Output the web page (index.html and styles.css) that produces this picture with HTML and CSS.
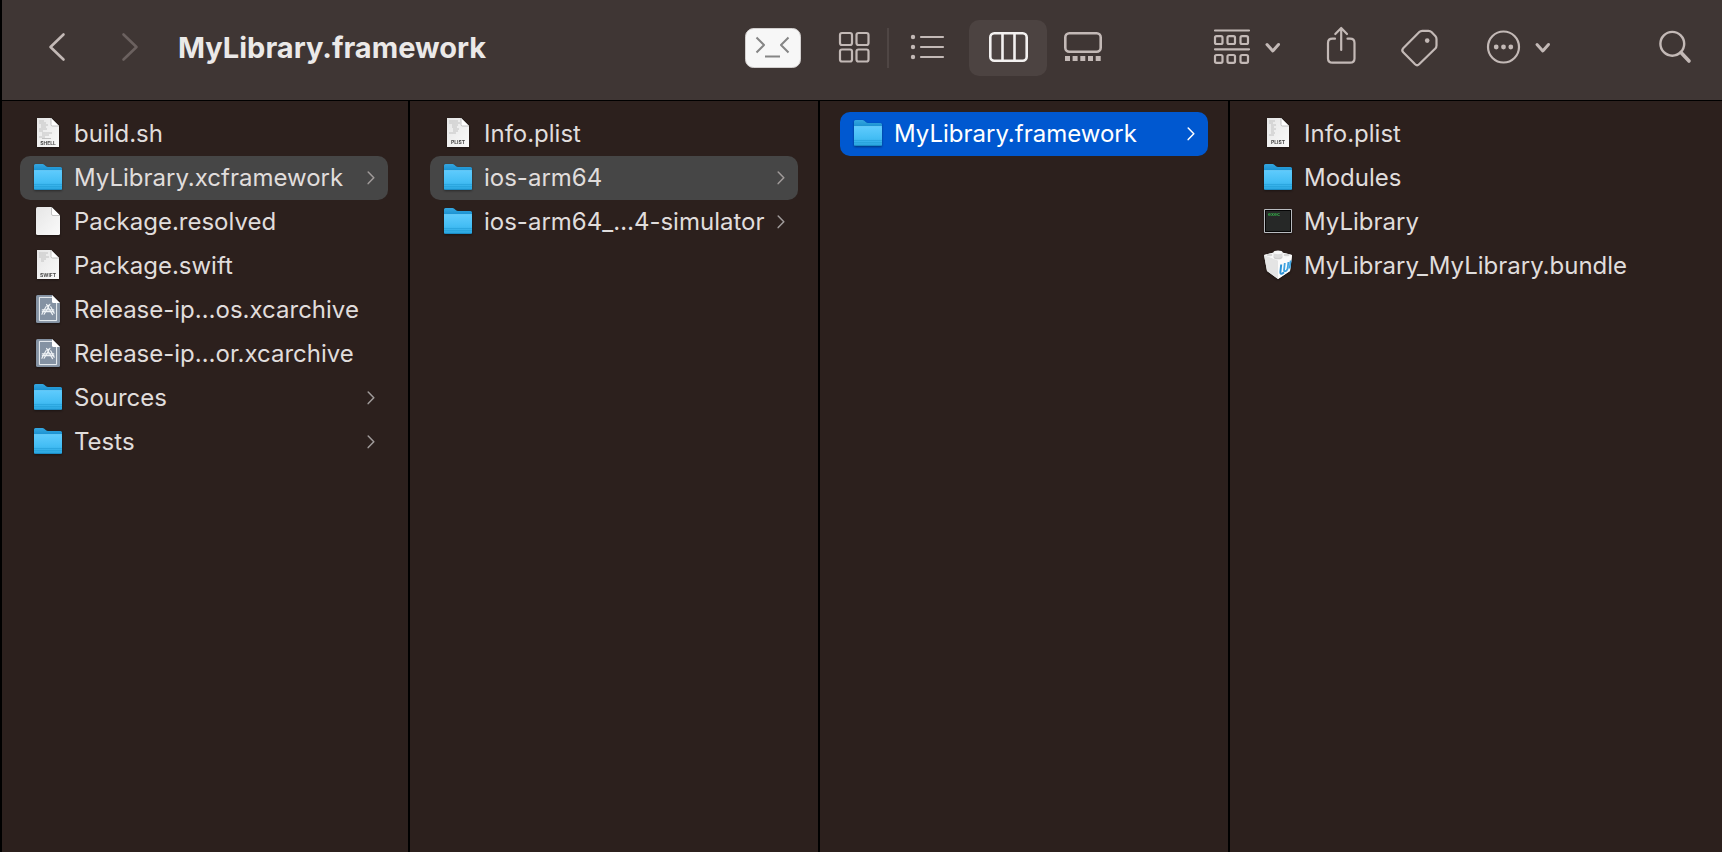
FILE: index.html
```
<!DOCTYPE html>
<html lang="en">
<head>
<meta charset="utf-8">
<title>MyLibrary.framework</title>
<link rel="stylesheet" href="styles.css">
</head>
<body>
<svg class="defs" aria-hidden="true">
  <defs>
    <linearGradient id="folder-front" x1="0" y1="0" x2="0" y2="1">
      <stop offset="0" stop-color="#5fcbfd"/><stop offset="0.6" stop-color="#43bdf4"/><stop offset="1" stop-color="#27a3dd"/>
    </linearGradient>
    <linearGradient id="folder-back" x1="0" y1="0" x2="0" y2="1">
      <stop offset="0" stop-color="#35a6e0"/><stop offset="1" stop-color="#0b86c9"/>
    </linearGradient>
    <linearGradient id="paper" x1="0" y1="0" x2="1" y2="1">
      <stop offset="0" stop-color="#e6e6e6"/><stop offset="1" stop-color="#fafafa"/>
    </linearGradient>
    <symbol id="folder" viewBox="0 0 28 32">
      <path d="M0 3.5Q0 2 1.5 2H8.5Q9.500 2 10.300 2.700L12 4.200Q12.800 5 14 5H26.500Q28 5 28 6.500V12H0Z" fill="url(#folder-back)"/>
      <path d="M0 8.500H27Q28 8.500 28 9.500V26.500Q28 28 26.500 28H1.500Q0 28 0 26.500Z" fill="url(#folder-front)"/>
      <path d="M0 8.500H28" stroke="#7bd6ff" stroke-width=".6"/>
      <path d="M0 22.500H28M0 24.500H28" stroke="#249dd6" stroke-width=".6"/>
      <path d="M1 27.600H27" stroke="#1683ba" stroke-width=".8"/>
    </symbol>
    <symbol id="sheet" viewBox="0 0 28 32">
      <path d="M3 0H17L25 8V29H3Z" fill="url(#paper)"/>
      <path d="M17 0V6.500Q17 8 18.500 8H25Z" fill="#fff"/>
      <path d="M17 0V6.500Q17 8 18.500 8H25" fill="none" stroke="#b5b5b5" stroke-width=".8"/>
    </symbol>
    <symbol id="document" viewBox="0 0 28 32">
      <path d="M3.500 1H17.500L26 9.500V27.500Q26 29 24.500 29H3.500Q2 29 2 27.500V2.500Q2 1 3.500 1Z" fill="url(#paper)"/>
      <path d="M17.500 1V8Q17.500 9.500 19 9.500H26Z" fill="#fff"/>
      <path d="M17.500 1V8Q17.500 9.500 19 9.500H26" fill="none" stroke="#b5b5b5" stroke-width=".8"/>
    </symbol>
    <symbol id="archive" viewBox="0 0 28 32">
      <path d="M3.500 1H18L26 9V27.500Q26 29 24.500 29H3.500Q2 29 2 27.500V2.500Q2 1 3.500 1Z" fill="#8492a3"/>
      <path d="M18 3.400H5.400V26.600H22.600V9" fill="none" stroke="#eef2f5" stroke-width="1"/>
      <path d="M18 1V7.500Q18 9 19.500 9H26Z" fill="#fff"/>
      <g fill="none" stroke="#eef2f5" stroke-width="1.200" stroke-linecap="round" stroke-linejoin="round">
        <path d="M12.600 10.500L14.200 13.200M15.900 10.300L10.100 20.200M14.200 13.200L18.600 20.600M13.200 11.500L15.400 11.200"/>
        <path d="M8.300 15.900H14.500M8.300 17.700H17M15.800 15.900H19.800M18 17.700H19.800"/>
        <path d="M8.800 18.200L7.900 20.200M12.200 12.500L8.600 18.500M16.700 12.800L20.200 19.200"/>
      </g>
    </symbol>
    <symbol id="exec" viewBox="0 0 28 32">
      <path d="M1 3H27Q28 3 28 4V26Q28 27 27 27H1Q0 27 0 26V4Q0 3 1 3Z" fill="#b9bcc0"/>
      <path d="M1 4H27V26H1Z" fill="#050505"/>
      <path d="M2 5H26V25H2Z" fill="#262827"/>
    </symbol>
    <symbol id="bundle" viewBox="0 0 28 32">
      <path d="M0 5L10 2.500L14 1L18 2.500L28 5L26 21L14 29L3 21Z" fill="#f1f1f1"/>
      <path d="M14 10.500L28 5L26 21L14 29Z" fill="#fbfbfb"/>
      <path d="M0 5L14 10.500V29L3 21Z" fill="#e4e4e4"/>
      <path d="M0 5L14 10.500L28 5L18 2.500H10Z" fill="#fafafa"/>
      <ellipse cx="14" cy="7" rx="4.500" ry="2.300" fill="#cfcfcf"/>
      <path d="M9.500 2.500V6.500Q14 9.500 18.500 6.500V2.500Z" fill="#dcdcdc"/>
      <ellipse cx="14" cy="2.300" rx="4.500" ry="1.900" fill="#f7f7f7"/>
      <ellipse cx="5.500" cy="5" rx="3" ry="1.200" fill="#d6d6d6"/>
      <ellipse cx="22.500" cy="5" rx="3" ry="1.200" fill="#d6d6d6"/>
      <path d="M17.200 14.500L16.400 22Q16.200 24.600 18.500 23.300L20 22.400" fill="none" stroke="#2b93d8" stroke-width="2"/>
      <path d="M20.800 13L20 20.300Q20.300 22 22.300 20.700Q23.400 20 23.700 18L24.400 12M26.700 10.500L25.600 18.500" fill="none" stroke="#3fa3e0" stroke-width="1.800"/>
    </symbol>
    <symbol id="chevron" viewBox="0 0 8 14">
      <path d="M1.200 1L6.800 6.800L1.200 12.600" fill="none" stroke="currentColor" stroke-width="1.500" stroke-linecap="round" stroke-linejoin="round"/>
    </symbol>
  </defs>
</svg>

<header class="toolbar">
  <nav class="history">
    <button class="tool" aria-label="Back">
      <svg width="48" height="48"><path d="M29.500 10.500L16.500 23L29.500 35.500" stroke-width="2.600"/></svg>
    </button>
    <button class="tool tool-off" aria-label="Forward" disabled>
      <svg width="48" height="48"><path d="M17.500 10.500L30.500 23L17.500 35.500" stroke-width="2.600"/></svg>
    </button>
  </nav>
  <h1 class="title">MyLibrary.framework</h1>

  <button class="tool" aria-label="Open in Terminal">
    <svg width="56" height="48">
      <rect x=".5" y="4.500" width="55" height="39" rx="8" fill="#f7f7f7" stroke="#d2cfce"/>
      <path d="M11.500 13.500L19 21L11.500 28.500M43.500 13.500L36 21L43.500 28.500M20 32.500H35" stroke="#858585" stroke-width="2" stroke-linecap="butt"/>
    </svg>
  </button>

  <div class="views" role="group" aria-label="View">
    <button class="tool" aria-label="Icons">
      <svg width="68" height="48" stroke-width="2.200">
        <rect x="21" y="9" width="12" height="12" rx="2"/><rect x="37.500" y="9" width="12" height="12" rx="2"/>
        <rect x="21" y="25.500" width="12" height="12" rx="2"/><rect x="37.500" y="25.500" width="12" height="12" rx="2"/>
      </svg>
    </button>
    <span class="separator"></span>
    <button class="tool" aria-label="List">
      <svg width="80" height="48">
        <path d="M32 13H54M32 23H54M32 33H54" stroke-width="2.200"/>
        <g class="solid"><circle cx="24" cy="13" r="2.200"/><circle cx="24" cy="23" r="2.200"/><circle cx="24" cy="33" r="2.200"/></g>
      </svg>
    </button>
    <button class="tool tool-on" aria-label="Columns" aria-pressed="true">
      <svg width="78" height="48" stroke-width="2.600">
        <rect x="21.300" y="9.300" width="36.400" height="27.400" rx="4"/>
        <path d="M33.500 9.500V36.500M45.500 9.500V36.500"/>
      </svg>
    </button>
    <button class="tool" aria-label="Gallery">
      <svg width="72" height="48">
        <rect x="18.300" y="9.300" width="35.400" height="18.400" rx="4" stroke-width="2.600"/>
        <path class="solid" d="M18 32h5v5h-5zM25.600 32h5v5h-5zM33.300 32h5v5h-5zM41 32h5v5h-5zM48.700 32h5v5h-5z"/>
      </svg>
    </button>
  </div>

  <div class="actions">
    <button class="tool" aria-label="Group by">
      <svg width="84" height="48" stroke-width="2.200">
        <path d="M10 6.500H44M10 25.300H44"/>
        <rect x="10" y="12.200" width="7.500" height="7.800" rx="1.500"/><rect x="22.500" y="12.200" width="7.500" height="7.800" rx="1.500"/><rect x="35.500" y="12.200" width="7.500" height="7.800" rx="1.500"/>
        <rect x="10" y="31" width="7.500" height="7.800" rx="1.500"/><rect x="22.500" y="31" width="7.500" height="7.800" rx="1.500"/><rect x="35.500" y="31" width="7.500" height="7.800" rx="1.500"/>
        <path d="M62 20.500L67.800 27L73.500 20.500" stroke-width="3"/>
      </svg>
    </button>
    <button class="tool" aria-label="Share">
      <svg width="48" height="48" stroke-width="2.200">
        <path d="M18 14.700H15.500Q11 14.700 11 19V34.500Q11 38.700 15.500 38.700H33Q37.500 38.700 37.500 34.500V19Q37.500 14.700 33 14.700H30.500"/>
        <path d="M24.200 26V4.500M18.300 10L24.200 4L30 10"/>
      </svg>
    </button>
    <button class="tool" aria-label="Tags">
      <svg width="48" height="48" stroke-width="2.200">
        <path d="M10.200 28.200Q8.300 26.200 10.200 24.200L26.300 8Q27.500 6.800 29.200 6.800H35.500Q37.300 6.800 38.500 8L42.300 11.900Q43.500 13.200 43.500 14.900V21.500Q43.500 23.200 42.300 24.500L26.100 40.300Q24.100 42.200 22.100 40.300Z"/>
        <circle class="solid" cx="34.200" cy="16.600" r="2.300"/>
      </svg>
    </button>
    <button class="tool" aria-label="More">
      <svg width="84" height="48" stroke-width="2.200">
        <circle cx="34.500" cy="23" r="15.500"/>
        <g class="solid"><circle cx="27.200" cy="23" r="2.400"/><circle cx="34.500" cy="23" r="2.400"/><circle cx="41.800" cy="23" r="2.400"/></g>
        <path d="M68 20.500L73.800 27L79.500 20.500" stroke-width="3"/>
      </svg>
    </button>
    <button class="tool search" aria-label="Search">
      <svg width="48" height="48" stroke-width="2.400">
        <circle cx="21.300" cy="19.800" r="11.900"/>
        <path d="M30 28.500L38 37" stroke-width="3.600"/>
      </svg>
    </button>
  </div>
</header>

<main class="browser">
  <ul class="column">
    <li><button class="row"><svg class="icon"><use href="#sheet"/><path d="M5 3h5M5 5h7M7 7h7M7 9h5M5 11h8M5 13h4M8 15h10M8 17h7M5 19h6M8 20.500h9" class="code"/><text x="14" y="26.500" class="kind">SHELL</text></svg><span class="name">build.sh</span></button></li>
    <li><button class="row row-open"><svg class="icon"><use href="#folder"/></svg><span class="name">MyLibrary.xcframework</span><svg class="more"><use href="#chevron"/></svg></button></li>
    <li><button class="row"><svg class="icon"><use href="#document"/></svg><span class="name">Package.resolved</span></button></li>
    <li><button class="row"><svg class="icon"><use href="#sheet"/><path d="M5 3h9M5 5h7M5 7h10M7 9h5M7 11h3" class="code"/><text x="14" y="26.500" class="kind">SWIFT</text></svg><span class="name">Package.swift</span></button></li>
    <li><button class="row"><svg class="icon"><use href="#archive"/></svg><span class="name">Release-ip…os.xcarchive</span></button></li>
    <li><button class="row"><svg class="icon"><use href="#archive"/></svg><span class="name">Release-ip…or.xcarchive</span></button></li>
    <li><button class="row"><svg class="icon"><use href="#folder"/></svg><span class="name">Sources</span><svg class="more"><use href="#chevron"/></svg></button></li>
    <li><button class="row"><svg class="icon"><use href="#folder"/></svg><span class="name">Tests</span><svg class="more"><use href="#chevron"/></svg></button></li>
  </ul>
  <ul class="column">
    <li><button class="row"><svg class="icon"><use href="#sheet"/><path d="M5 3h9M5 5h11M8 7h6M8 9h5M9 11h6M9 13h5M5 15h7" class="code"/><text x="14" y="26" class="kind">PLIST</text></svg><span class="name">Info.plist</span></button></li>
    <li><button class="row row-open"><svg class="icon"><use href="#folder"/></svg><span class="name">ios-arm64</span><svg class="more"><use href="#chevron"/></svg></button></li>
    <li><button class="row"><svg class="icon"><use href="#folder"/></svg><span class="name">ios-arm64_…4-simulator</span><svg class="more"><use href="#chevron"/></svg></button></li>
  </ul>
  <ul class="column">
    <li><button class="row row-selected"><svg class="icon"><use href="#folder"/></svg><span class="name">MyLibrary.framework</span><svg class="more"><use href="#chevron"/></svg></button></li>
  </ul>
  <ul class="column">
    <li><button class="row"><svg class="icon"><use href="#sheet"/><path d="M5 3h6M5 5h4M7 7h5M7 9h3M7 11h5M7 13h3M7 15h4M5 17h5" class="code"/><text x="14" y="26" class="kind">PLIST</text></svg><span class="name">Info.plist</span></button></li>
    <li><button class="row"><svg class="icon"><use href="#folder"/></svg><span class="name">Modules</span></button></li>
    <li><button class="row"><svg class="icon"><use href="#exec"/><text x="4" y="10" class="prompt">exec</text></svg><span class="name">MyLibrary</span></button></li>
    <li><button class="row"><svg class="icon"><use href="#bundle"/></svg><span class="name">MyLibrary_MyLibrary.bundle</span></button></li>
  </ul>
</main>
</body>
</html>
```
FILE: styles.css
```
* { box-sizing: border-box; }

body {
  margin: 0;
  min-height: 100vh;
  display: flex;
  flex-direction: column;
  background: #2c201d;
  color: #e0dddc;
  font-family: Inter, "Liberation Sans", sans-serif;
}

button {
  border: 0;
  padding: 0;
  background: none;
  color: inherit;
  font: inherit;
  text-align: left;
}

.defs {
  position: absolute;
  width: 0;
  height: 0;
}

.toolbar {
  display: flex;
  align-items: center;
  height: 101px;
  padding: 0 23px 4px 32px;
  background: #3f3634;
  border-left: 2px solid #000;
  border-bottom: 1px solid #000;
}

.history {
  display: flex;
  gap: 24px;
}

.title {
  flex: 1;
  margin: 0;
  padding-left: 24px;
  color: #ebe9e8;
  font-size: 29px;
  font-weight: 700;
  line-height: 36px;
  white-space: nowrap;
}

.tool {
  display: flex;
  align-items: center;
  justify-content: center;
  height: 56px;
  border-radius: 10px;
  color: #c3b9b6;
}

.tool svg {
  display: block;
  fill: none;
  stroke: currentColor;
  stroke-linecap: round;
  stroke-linejoin: round;
}

.tool .solid {
  fill: currentColor;
  stroke: none;
}

.tool-off { color: #6b615f; }

.tool-on {
  background: #4c4341;
  color: #f3f1f0;
}

.views {
  display: flex;
  align-items: center;
  margin-left: 18px;
}

.separator {
  width: 2px;
  height: 40px;
  background: #4f4644;
}

.actions {
  display: flex;
  gap: 28px;
  margin-left: 86px;
}

.search { margin-left: 70px; }

.browser {
  flex: 1;
  display: grid;
  grid-template-columns: 5fr 5fr 5fr 6fr;
}

.column {
  min-width: 0;
  margin: 0;
  padding: 11px 20px;
  list-style: none;
  border-right: 2px solid #000;
}

.column:first-child {
  padding-left: 18px;
  border-left: 2px solid #000;
}

.column:last-child { border-right: 0; }

.row {
  display: flex;
  align-items: center;
  width: 100%;
  height: 44px;
  padding: 0 13px 0 14px;
  border-radius: 10px;
}

.row-open { background: #464646; }

.row-selected {
  background: #0058d0;
  color: #fff;
}

.icon {
  flex: none;
  width: 28px;
  height: 32px;
  overflow: visible;
  filter: drop-shadow(0 1px 1px rgb(0 0 0 / 40%));
}

.name {
  flex: 1;
  min-width: 0;
  padding-left: 12px;
  font-size: 24px;
  line-height: 32px;
  white-space: nowrap;
}

.more {
  flex: none;
  width: 8px;
  height: 14px;
  color: #a09b9a;
}

.row-selected .more { color: #fff; }

.code {
  fill: none;
  stroke: #c2c2c2;
  stroke-width: 1px;
}

.kind {
  fill: #4a4a4a;
  font-size: 5px;
  font-weight: 700;
  text-anchor: middle;
}

.prompt {
  fill: #35b24a;
  font-family: "Liberation Mono", monospace;
  font-size: 5px;
  font-weight: 700;
}
```
